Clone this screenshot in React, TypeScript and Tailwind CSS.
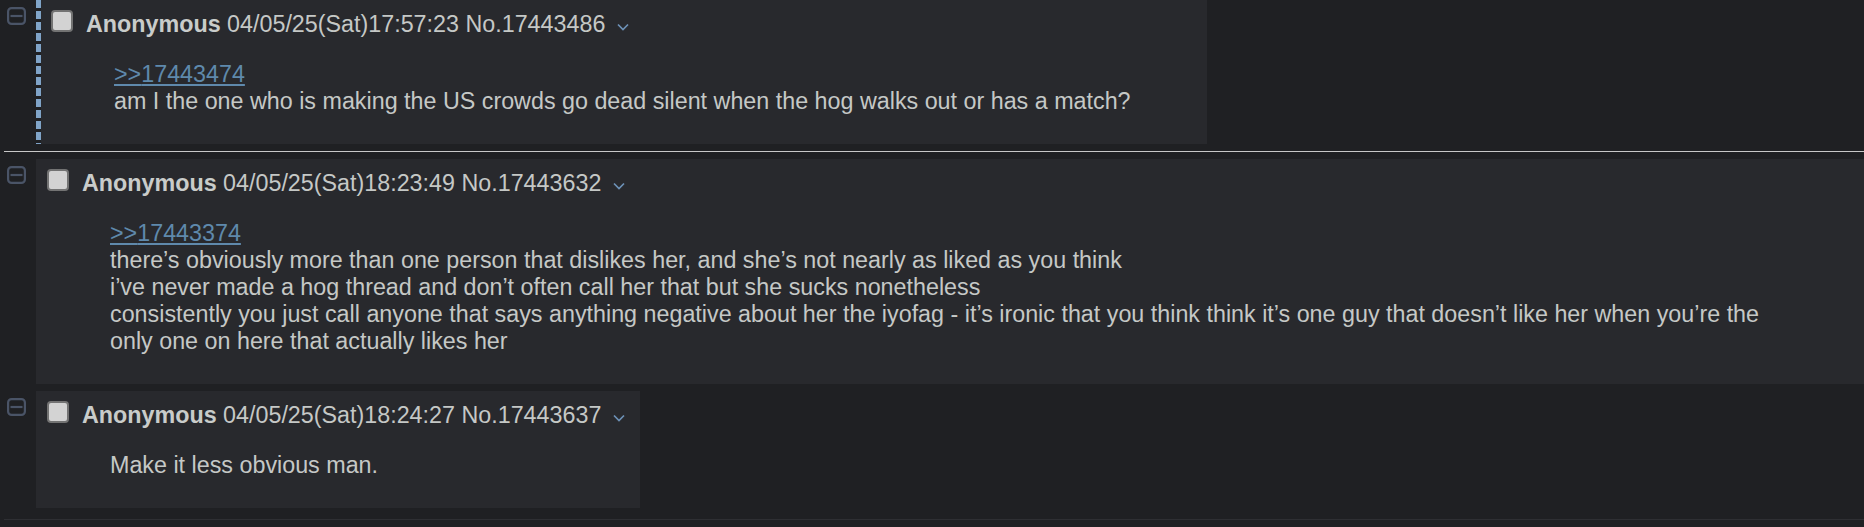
import React from "react";

function CollapseIcon() {
  return (
    <svg width="19" height="18" viewBox="0 0 19 18" fill="none">
      <rect x="1.1" y="1.1" width="16.8" height="15.8" rx="3.5" stroke="#4a5467" strokeWidth="2.2" />
      <line x1="3.5" y1="9" x2="15.5" y2="9" stroke="#4a5467" strokeWidth="2.2" />
    </svg>
  );
}

function Chevron() {
  return (
    <svg width="12" height="8" viewBox="0 0 12 8" fill="none" className="ml-[12px] mt-[12px] shrink-0">
      <path d="M1 1.5 L6 6.5 L11 1.5" stroke="#6d91b6" strokeWidth="1.7" />
    </svg>
  );
}

type PostProps = {
  date: string;
  no: string;
  quote?: string;
  lines: string[];
  marked?: boolean;
};

function Post({ date, no, quote, lines, marked }: PostProps) {
  return (
    <div className="flex">
      <div className="w-[36px] shrink-0 pl-[7px] pt-[7px]">
        <CollapseIcon />
      </div>
      {marked && (
        <div className="w-[5px] shrink-0 bg-[repeating-linear-gradient(to_bottom,#80a4c8_0px,#80a4c8_8px,transparent_8px,transparent_11px)]" />
      )}
      <div
        className={
          marked
            ? "min-w-0 bg-[#28292d] pl-[10px] pr-[15px] pt-[11px] pb-[29px]"
            : "min-w-0 bg-[#28292d] pl-[11px] pr-[15px] pt-[11px] pb-[29px]"
        }
      >
        <div className="flex items-start h-[27px] leading-[27px] whitespace-nowrap">
          <span className="w-[22px] h-[22px] -mt-[1px] shrink-0 rounded-[4px] border-2 border-[#737373] bg-[#d3d3d3]" />
          <span className="ml-[13px] font-bold text-[#c9ccca]">Anonymous</span>
          <span>&nbsp;{date} No.{no}</span>
          <Chevron />
        </div>
        <div className="ml-[63px] mr-[61px] mt-[23px] leading-[27px]">
          {quote && (
            <div>
              <a className="text-[#5f89ac] underline">&gt;&gt;{quote}</a>
            </div>
          )}
          {lines.map((l, i) => (
            <div key={i}>{l}</div>
          ))}
        </div>
      </div>
    </div>
  );
}

export default function App() {
  return (
    <div className="min-h-[527px] bg-[#1f2023] text-[#c5c8c6] font-['Liberation_Sans',Arial,sans-serif] text-[23.3px]">
      <Post
        marked
        date="04/05/25(Sat)17:57:23"
        no="17443486"
        quote="17443474"
        lines={["am I the one who is making the US crowds go dead silent when the hog walks out or has a match?"]}
      />
      <div className="ml-[4px] my-[7px] h-px bg-[#c8c8c8]" />
      <Post
        date="04/05/25(Sat)18:23:49"
        no="17443632"
        quote="17443374"
        lines={[
          "there’s obviously more than one person that dislikes her, and she’s not nearly as liked as you think",
          "i’ve never made a hog thread and don’t often call her that but she sucks nonetheless",
          "consistently you just call anyone that says anything negative about her the iyofag - it’s ironic that you think think it’s one guy that doesn’t like her when you’re the only one on here that actually likes her",
        ]}
      />
      <div className="h-[7px]" />
      <Post date="04/05/25(Sat)18:24:27" no="17443637" lines={["Make it less obvious man."]} />
      <div className="ml-[4px] mt-[11px] h-px bg-[#2e2f33]" />
    </div>
  );
}
